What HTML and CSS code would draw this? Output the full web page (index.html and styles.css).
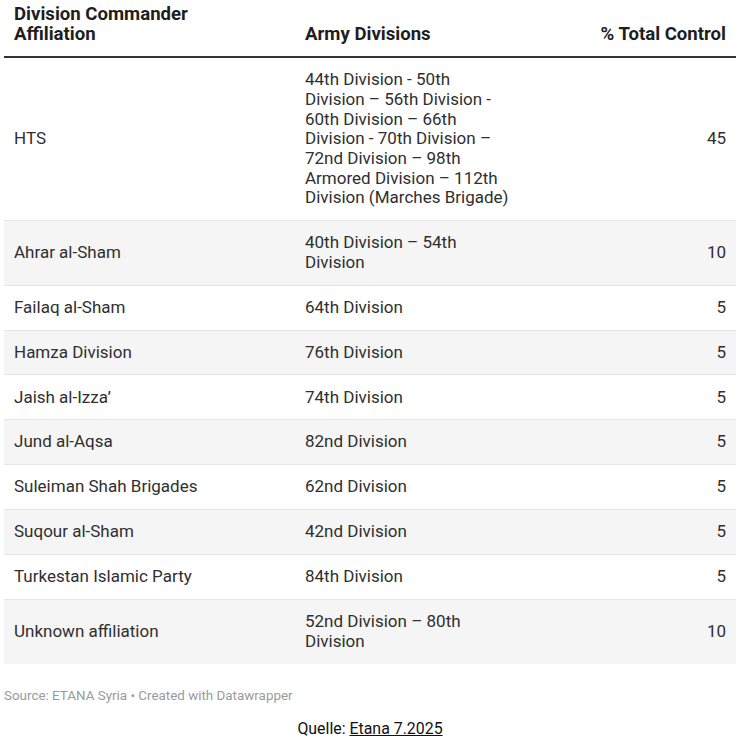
FILE: index.html
```html
<!DOCTYPE html>
<html lang="en">
<head>
<meta charset="utf-8">
<title>Division Commander Affiliation</title>
<link rel="stylesheet" href="styles.css">
</head>
<body>
<div class="page">
  <table class="dw-table">
    <colgroup>
      <col class="c1">
      <col class="c2">
      <col class="c3">
    </colgroup>
    <thead>
      <tr>
        <th class="left">Division Commander<br>Affiliation</th>
        <th class="left">Army Divisions</th>
        <th class="right">% Total Control</th>
      </tr>
    </thead>
    <tbody>
      <tr><td>HTS</td><td class="div">44th Division - 50th Division – 56th Division - 60th Division – 66th Division - 70th Division – 72nd Division – 98th Armored Division – 112th Division (Marches Brigade)</td><td class="num">45</td></tr>
      <tr><td>Ahrar al-Sham</td><td class="div">40th Division – 54th Division</td><td class="num">10</td></tr>
      <tr><td>Failaq al-Sham</td><td class="div">64th Division</td><td class="num">5</td></tr>
      <tr><td>Hamza Division</td><td class="div">76th Division</td><td class="num">5</td></tr>
      <tr><td>Jaish al-Izza’</td><td class="div">74th Division</td><td class="num">5</td></tr>
      <tr><td>Jund al-Aqsa</td><td class="div">82nd Division</td><td class="num">5</td></tr>
      <tr><td>Suleiman Shah Brigades</td><td class="div">62nd Division</td><td class="num">5</td></tr>
      <tr><td>Suqour al-Sham</td><td class="div">42nd Division</td><td class="num">5</td></tr>
      <tr><td>Turkestan Islamic Party</td><td class="div">84th Division</td><td class="num">5</td></tr>
      <tr><td>Unknown affiliation</td><td class="div">52nd Division – 80th Division</td><td class="num">10</td></tr>
    </tbody>
  </table>
  <p class="source">Source: ETANA Syria • Created with Datawrapper</p>
  <p class="quelle">Quelle: <a href="#">Etana 7.2025</a></p>
</div>
</body>
</html>
```

FILE: styles.css
```css
html, body {
  margin: 0;
  padding: 0;
  background: #ffffff;
}

body {
  font-family: Roboto, "Liberation Sans", sans-serif;
  color: #2b2b2b;
}

.page {
  padding: 0 14px 0 4px;
}

.dw-table {
  width: 732px;
  border-collapse: collapse;
  table-layout: fixed;
  font-size: 17px;
  line-height: 19.7px;
}

.c1 { width: 291px; }
.c2 { width: 230px; }
.c3 { width: 211px; }

.dw-table th {
  font-weight: 700;
  font-size: 18.6px;
  line-height: 20px;
  color: #1e1e1e;
  vertical-align: bottom;
  padding: 4px 10px 12px 10px;
  border-bottom: 2px solid #333333;
}

.dw-table th.left { text-align: left; }
.dw-table th.right { text-align: right; }

.dw-table td {
  padding: 12.1px 10px 12.1px 10px;
  border-bottom: 1px solid #e6e6e6;
  vertical-align: middle;
  color: #2f2f2f;
}

.dw-table td.div {
  padding-right: 14px;
}

.dw-table td.num {
  text-align: right;
}

.dw-table tbody tr:nth-child(even) td {
  background: #f5f5f5;
}

.dw-table tbody tr:last-child td {
  border-bottom: none;
}

.source {
  margin: 24px 0 0 0;
  font-size: 13.4px;
  line-height: 16px;
  color: #9a9a9a;
}

.quelle {
  margin: 15px 0 0 0;
  text-align: center;
  font-size: 15.9px;
  line-height: 19px;
  color: #111111;
}

.quelle a {
  color: #111111;
  text-decoration: underline;
}
```
